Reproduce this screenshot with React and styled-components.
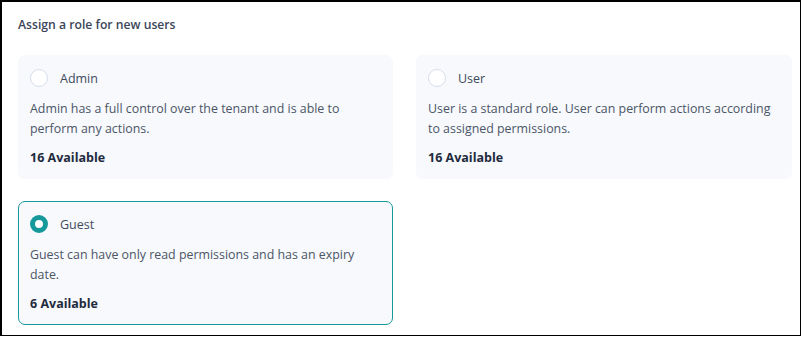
import styled, { createGlobalStyle } from "styled-components";

const GlobalStyle = createGlobalStyle`
  html, body {
    margin: 0;
    padding: 0;
    background: #ffffff;
  }
  body {
    font-family: "Open Sans", "Noto Sans", sans-serif;
  }
`;

const Frame = styled.div`
  box-sizing: border-box;
  width: 801px;
  height: 336px;
  border: 2px solid #000;
  border-right-width: 1px;
  border-bottom-width: 1px;
  padding: 14px 8px 0 16px;
`;

const Heading = styled.h2`
  margin: 0 0 21px;
  font-size: 12.2px;
  line-height: 18px;
  font-weight: 600;
  color: #3b4658;
`;

const Grid = styled.div`
  display: grid;
  grid-template-columns: 375px 376px;
  grid-auto-rows: 124px;
  column-gap: 23px;
  row-gap: 22px;
`;

const Card = styled.div`
  box-sizing: border-box;
  background: #f7f9fd;
  border-radius: 7px;
  border: 1px solid ${(p) => (p.$selected ? "#17999a" : "#f7f9fd")};
  padding: 12px 11px 0 11px;
  display: flex;
  flex-direction: column;
`;

const Header = styled.div`
  display: flex;
  align-items: center;
  gap: 12px;
  height: 20px;
`;

const Radio = styled.span`
  box-sizing: border-box;
  width: 18px;
  height: 18px;
  border-radius: 50%;
  background: #fff;
  border: ${(p) => (p.$checked ? "5.5px solid #15999a" : "1.5px solid #d6deeb")};
`;

const Label = styled.span`
  font-size: 12.5px;
  color: #3e4a5c;
`;

const Description = styled.p`
  margin: 11px 0 0;
  font-size: 12.4px;
  line-height: 20px;
  color: #4b5566;
`;

const Count = styled.div`
  margin-top: 10px;
  font-size: 12.5px;
  font-weight: 700;
  color: #1f2b3d;
`;

const roles = [
  {
    name: "Admin",
    text: "Admin has a full control over the tenant and is able to perform any actions.",
    count: 16,
  },
  {
    name: "User",
    text: "User is a standard role. User can perform actions according to assigned permissions.",
    count: 16,
  },
  {
    name: "Guest",
    text: "Guest can have only read permissions and has an expiry date.",
    count: 6,
    selected: true,
  },
];

export default function App() {
  return (
    <>
      <GlobalStyle />
      <Frame>
        <Heading>Assign a role for new users</Heading>
        <Grid>
          {roles.map((r) => (
            <Card key={r.name} $selected={r.selected}>
              <Header>
                <Radio $checked={r.selected} />
                <Label>{r.name}</Label>
              </Header>
              <Description>{r.text}</Description>
              <Count>{r.count} Available</Count>
            </Card>
          ))}
        </Grid>
      </Frame>
    </>
  );
}
